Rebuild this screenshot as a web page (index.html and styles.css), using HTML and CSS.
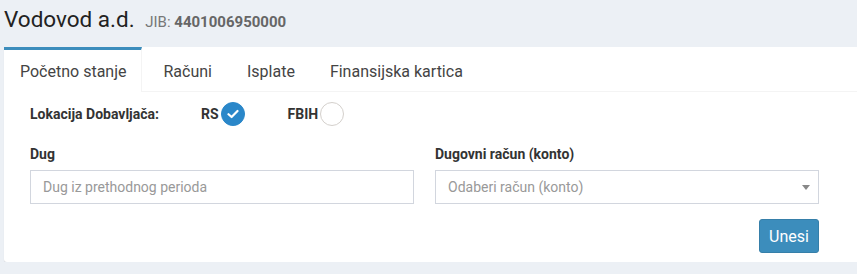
FILE: index.html
```html
<!DOCTYPE html>
<html>
<head>
  <meta charset="UTF-8">
  <title>Vodovod a.d.</title>
  <meta name="viewport" content="width=device-width, initial-scale=1.0">
  <link rel="stylesheet" href="styles.css">
</head>
<body>
  <h1 class="page-title">Vodovod a.d. <small>JIB: <b>4401006950000</b></small></h1>

  <div class="tabs-box">
    <ul class="tabs">
      <li class="active">Početno stanje</li>
      <li>Računi</li>
      <li>Isplate</li>
      <li>Finansijska kartica</li>
    </ul>

    <div class="tab-body">
      <div class="location">
        <span class="loc-label">Lokacija Dobavljača:</span>
        <label class="check checked">RS
          <span class="circle">
            <svg width="12" height="10" viewBox="0 0 12 10"><path d="M1.5 5.2 L4.6 8 L10.5 2" fill="none" stroke="#fff" stroke-width="2.2" stroke-linecap="round" stroke-linejoin="round"/></svg>
          </span>
        </label>
        <label class="check">FBIH <span class="circle"></span></label>
      </div>

      <div class="form-row">
        <div class="field">
          <label class="field-label">Dug</label>
          <input class="input" type="text" placeholder="Dug iz prethodnog perioda">
        </div>
        <div class="field">
          <label class="field-label">Dugovni račun (konto)</label>
          <div class="input select">
            <span class="placeholder">Odaberi račun (konto)</span>
            <span class="caret"></span>
          </div>
        </div>
      </div>

      <div class="actions">
        <button class="btn">Unesi</button>
      </div>
    </div>
  </div>
</body>
</html>
```

FILE: styles.css
```css
body {
  font-family: Roboto, "Liberation Sans", sans-serif;
  margin: 0;
  padding: 0 0 0 4px;
  background: #ecf0f5;
  color: #333;
  overflow: hidden;
}

.page-title {
  margin: 0;
  height: 47px;
  padding-top: 4px;
  box-sizing: border-box;
  font-size: 22.5px;
  font-weight: 400;
  line-height: 30px;
  color: #222;
}

.page-title small {
  font-size: 15px;
  color: #777;
  margin-left: 5px;
}

.page-title small b {
  font-weight: 700;
  color: #666;
}

.tabs-box {
  background: #fff;
  width: 860px;
  border-radius: 3px;
  box-shadow: 0 1px 1px rgba(0,0,0,0.1);
  height: 215px;
}

.tabs {
  display: flex;
  list-style: none;
  margin: 0;
  padding: 0;
  border-bottom: 1px solid #f4f4f4;
}

.tabs li {
  font-size: 16px;
  color: #444;
  padding: 2px 14px 0 16px;
  margin-right: 5px;
  line-height: 39px;
  border-top: 3px solid transparent;
}

.tabs li.active {
  border-top-color: #3c8dbc;
  border-right: 1px solid #f4f4f4;
  margin-bottom: -1px;
  padding: 2px 15px 1px 16px;
  background: #fff;
}

.tab-body {
  padding: 10px 0 0 26px;
}

.location {
  display: flex;
  align-items: center;
  height: 24px;
  font-size: 14px;
  font-weight: 700;
  color: #333;
}

.loc-label {
  width: 171px;
}

.check {
  display: flex;
  align-items: center;
  gap: 2px;
  margin-right: 43px;
}

.circle {
  display: inline-flex;
  align-items: center;
  justify-content: center;
  width: 22px;
  height: 22px;
  border-radius: 50%;
  border: 1px solid #d4d0cc;
  background: #fff;
}

.check.checked .circle {
  background: #2a87c9;
  border-color: #2a87c9;
}

.form-row {
  display: grid;
  grid-template-columns: 384px 384px;
  gap: 21px;
  margin-top: 19px;
}

.field-label {
  display: block;
  font-size: 14px;
  font-weight: 700;
  color: #333;
  height: 18px;
  line-height: 18px;
  margin-bottom: 7px;
}

.input {
  display: block;
  width: 100%;
  height: 34px;
  box-sizing: border-box;
  border: 1px solid #d2d6de;
  padding: 6px 12px;
  font-family: inherit;
  font-size: 14px;
  color: #555;
  outline: none;
}

.input::placeholder {
  color: #999;
}

.select {
  display: flex;
  align-items: center;
  justify-content: space-between;
}

.placeholder {
  color: #999;
}

.caret {
  width: 0;
  height: 0;
  border-left: 4px solid transparent;
  border-right: 4px solid transparent;
  border-top: 5px solid #888;
  margin-right: -4px;
}

.actions {
  display: flex;
  justify-content: flex-end;
  width: 789px;
  margin-top: 15px;
}

.btn {
  background: #3c8dbc;
  border: 1px solid #367fa9;
  color: #fff;
  font-family: inherit;
  font-size: 16px;
  border-radius: 3px;
  width: 60px;
  height: 34px;
  padding: 0;
  cursor: pointer;
}
```
